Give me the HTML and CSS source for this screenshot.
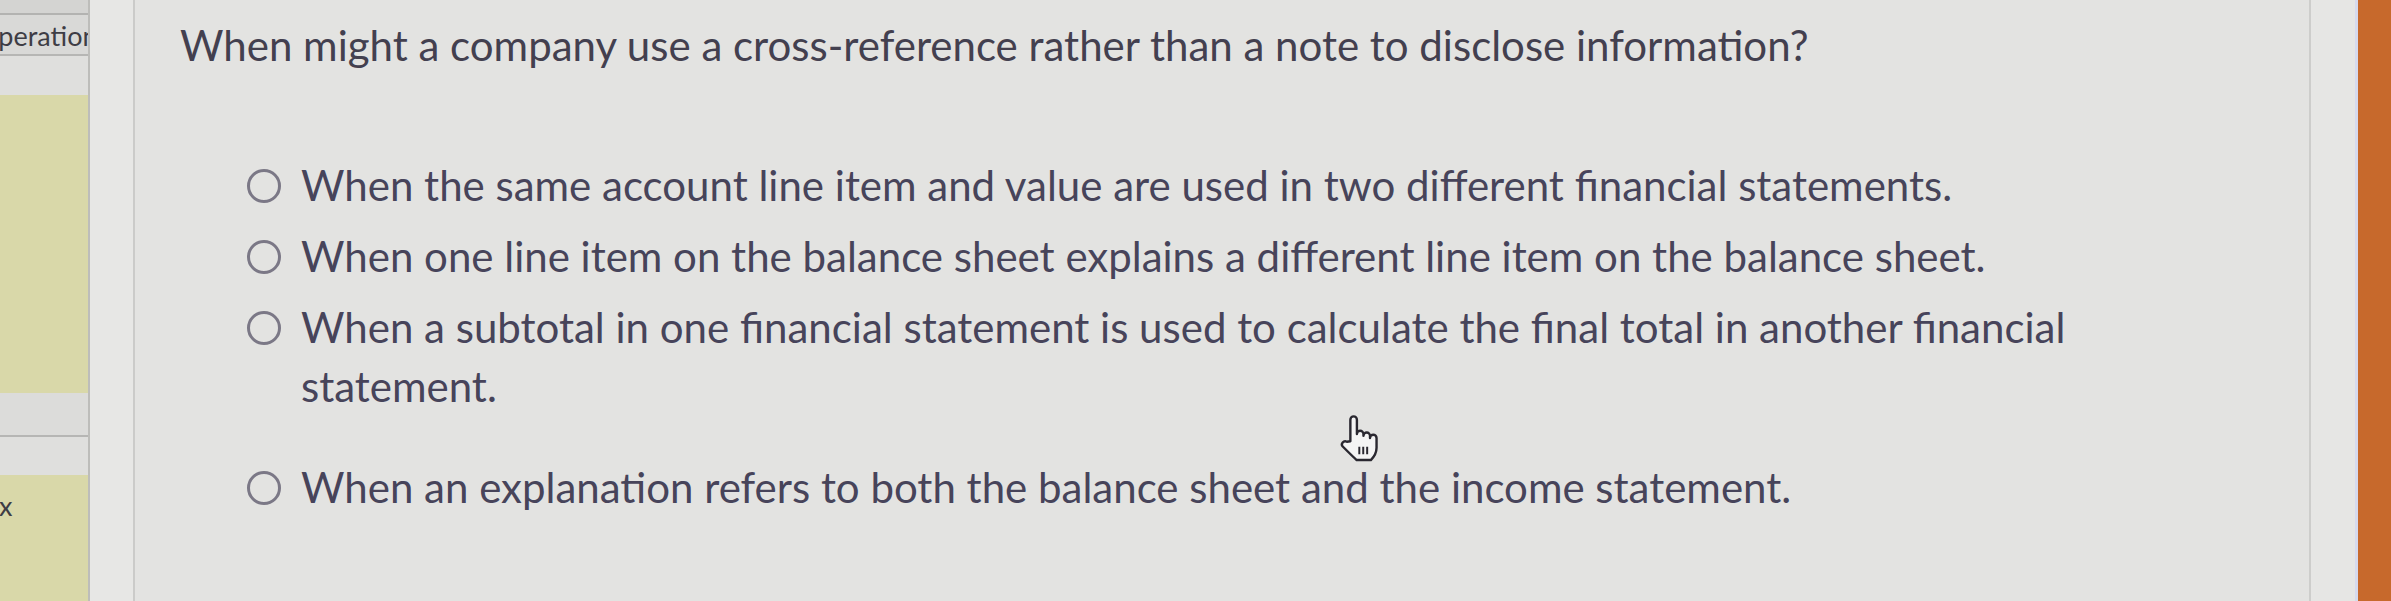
FILE: index.html
```html
<!DOCTYPE html>
<html lang="en">
<head>
<meta charset="utf-8">
<title>Question</title>
<link rel="stylesheet" href="styles.css">
</head>
<body>
<div class="screen">
  <aside class="sidebar">
    <div class="sb-row sb-top"></div>
    <div class="sb-row sb-label"><span class="sb-text sb-text-op">operation</span></div>
    <div class="sb-row sb-plain"></div>
    <div class="sb-row sb-yellow sb-yellow-1"></div>
    <div class="sb-row sb-label sb-label-2"></div>
    <div class="sb-row sb-plain sb-plain-2"></div>
    <div class="sb-row sb-yellow sb-yellow-2"><span class="sb-text sb-text-x">x</span></div>
  </aside>
  <div class="gutter-left"></div>
  <main class="main">
    <h1 class="question">When might a company use a cross-reference rather than a note to disclose information?</h1>
    <div class="options">
      <label class="option"><input type="radio" name="q" class="radio"><span class="option-text">When the same account line item and value are used in two different financial statements.</span></label>
      <label class="option"><input type="radio" name="q" class="radio"><span class="option-text">When one line item on the balance sheet explains a different line item on the balance sheet.</span></label>
      <label class="option"><input type="radio" name="q" class="radio"><span class="option-text">When a subtotal in one financial statement is used to calculate the final total in another financial statement.</span></label>
      <label class="option option-last"><input type="radio" name="q" class="radio"><span class="option-text">When an explanation refers to both the balance sheet and the income statement.</span></label>
    </div>
    <svg class="cursor" viewBox="0 0 20 22" width="44" height="48" aria-hidden="true">
      <path d="M6.5 12.5 V2.6 a1.5 1.5 0 0 1 3 0 V9.2 a1.5 1.5 0 0 1 3 0 V10 a1.5 1.5 0 0 1 3 0 V11 a1.5 1.5 0 0 1 3 0 V15.5 c0 2.6 -1.6 4.6 -2.6 5.6 H9.4 c-1.4 -1.2 -3.6 -3.4 -6.4 -6.2 c-1.1 -1.2 0.4 -3 1.9 -2.2 Z" fill="#f4f4f4" stroke="#2a2830" stroke-width="1.1" stroke-linejoin="round"/>
      <path d="M10.6 15 v3.4 M12.4 15 v3.4 M14.2 15 v3.4" stroke="#2a2830" stroke-width="0.9" fill="none"/>
    </svg>
  </main>
  <div class="gutter-right"></div>
  <div class="edge"></div>
  <div class="orange"></div>
</div>
</body>
</html>
```
FILE: styles.css
```css
* { box-sizing: border-box; }
html, body { margin: 0; padding: 0; }
body {
  width: 2391px;
  height: 601px;
  overflow: hidden;
  background: #e3e3e1;
  font-family: Lato, "Open Sans", "Liberation Sans", sans-serif;
  color: #46435a;
}
.screen {
  display: flex;
  width: 2391px;
  height: 601px;
}
.sidebar {
  width: 90px;
  flex: none;
  display: flex;
  flex-direction: column;
  overflow: hidden;
  border-right: 2px solid #bdbdba;
}
.sb-row { flex: none; overflow: hidden; white-space: nowrap; }
.sb-top { height: 15px; background: #d4d4d2; border-bottom: 2px solid #b3b3b1; }
.sb-label { height: 41px; background: #d9d9d7; border-bottom: 2px solid #b6b6b4; display: flex; align-items: center; }
.sb-plain { height: 39px; background: #dfdfdd; }
.sb-yellow { background: #d9d8a9; }
.sb-yellow-1 { height: 298px; }
.sb-label-2 { height: 44px; background: #dcdcda; }
.sb-plain-2 { height: 38px; }
.sb-yellow-2 { flex: 1; }
.sb-text {
  display: block;
  font-size: 27px;
  color: #3e3d45;
  line-height: 1;
}
.sb-text-op { margin-left: -17px; margin-top: 1px; }
.sb-text-x { margin-left: -1px; margin-top: 17px; }
.gutter-left {
  width: 45px;
  flex: none;
  background: #e7e7e5;
  border-right: 2px solid #cbcbc9;
}
.main {
  flex: 1;
  position: relative;
  padding: 20px 0 0 45px;
  background: #e3e3e1;
}
.question {
  margin: 0;
  font-size: 42px;
  font-weight: 400;
  line-height: 50px;
  color: #43404f;
  white-space: nowrap;
}
.options {
  margin-top: 86px;
  margin-left: 67px;
  width: 1904px;
  display: flex;
  flex-direction: column;
  gap: 12px;
}
.option {
  display: flex;
  align-items: flex-start;
  gap: 20px;
  cursor: pointer;
}
.option-last { margin-top: 30px; }
.radio {
  appearance: none;
  -webkit-appearance: none;
  margin: 13px 0 0 0;
  width: 34px;
  height: 34px;
  flex: none;
  border: 3px solid #7b7886;
  border-radius: 50%;
  background: transparent;
}
.option-text {
  font-size: 42px;
  line-height: 59px;
  color: #47445a;
}
.cursor {
  position: absolute;
  left: 1201px;
  top: 414px;
}
.gutter-right {
  width: 46px;
  flex: none;
  background: #e6e6e4;
  border-left: 2px solid #cdcdcb;
}
.edge {
  width: 3px;
  flex: none;
  background: #d6daee;
}
.orange {
  width: 33px;
  flex: none;
  background: #c7692c;
}
```
